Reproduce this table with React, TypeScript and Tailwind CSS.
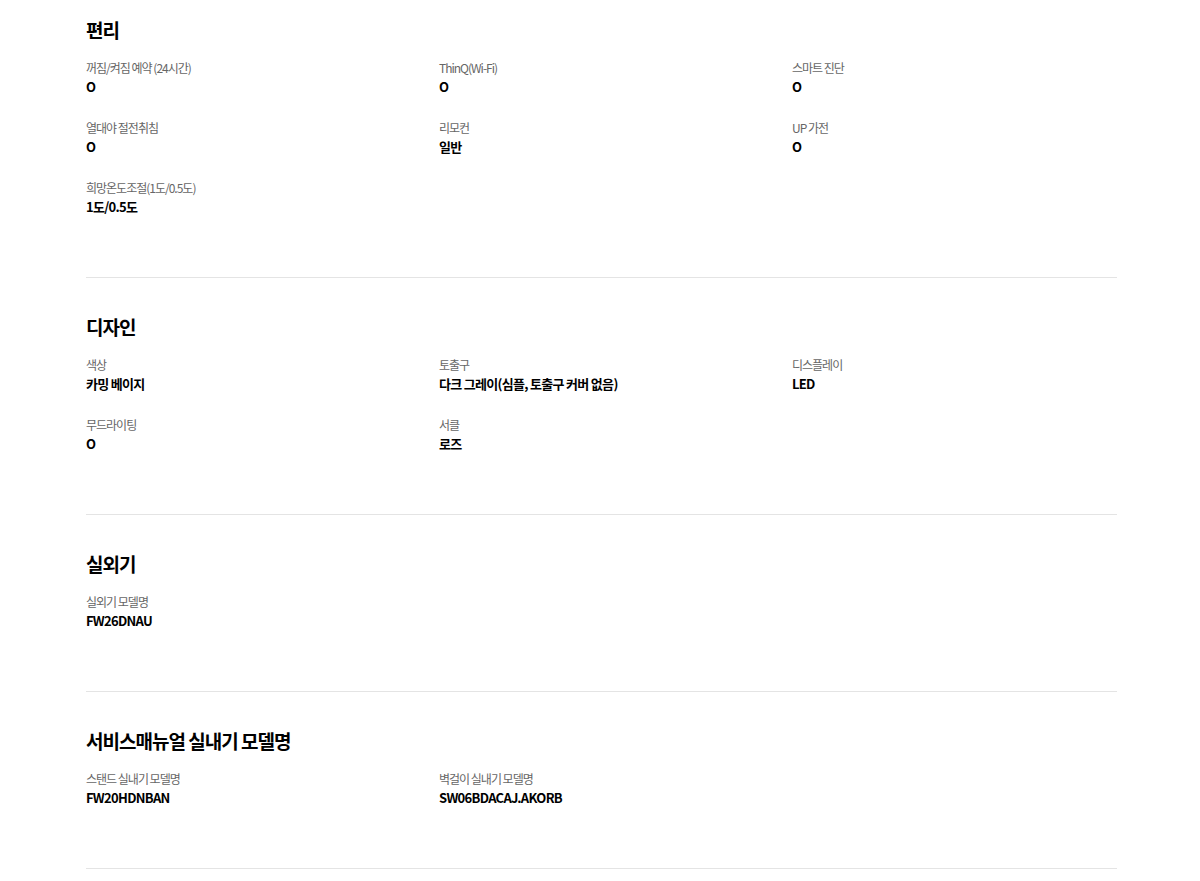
import { FC } from 'react';

interface SpecItem {
    label: string;
    value: string;
}

interface SpecSection {
    title: string;
    items: SpecItem[];
}

const sections: SpecSection[] = [
    {
        title: '편리',
        items: [
            { label: '꺼짐/켜짐 예약 (24시간)', value: 'O' },
            { label: 'ThinQ(Wi-Fi)', value: 'O' },
            { label: '스마트 진단', value: 'O' },
            { label: '열대야 절전취침', value: 'O' },
            { label: '리모컨', value: '일반' },
            { label: 'UP 가전', value: 'O' },
            { label: '희망온도조절(1도/0.5도)', value: '1도/0.5도' },
        ],
    },
    {
        title: '디자인',
        items: [
            { label: '색상', value: '카밍 베이지' },
            { label: '토출구', value: '다크 그레이(심플, 토출구 커버 없음)' },
            { label: '디스플레이', value: 'LED' },
            { label: '무드라이팅', value: 'O' },
            { label: '서클', value: '로즈' },
        ],
    },
    {
        title: '실외기',
        items: [{ label: '실외기 모델명', value: 'FW26DNAU' }],
    },
    {
        title: '서비스매뉴얼 실내기 모델명',
        items: [
            { label: '스탠드 실내기 모델명', value: 'FW20HDNBAN' },
            { label: '벽걸이 실내기 모델명', value: 'SW06BDACAJ.AKORB' },
        ],
    },
];

const Section: FC<{ section: SpecSection; first?: boolean }> = ({ section, first }) => {
    return (
        <section className={`border-b border-[#e4e4e4] pb-[60px] ${first ? 'pt-[16px]' : 'pt-[35px]'}`}>
            <h2 className="text-[19px] leading-[28px] font-bold text-black tracking-[-1px]">
                {section.title}
            </h2>
            <dl className="mt-[14px] grid grid-cols-3 gap-x-7 gap-y-[21px]">
                {section.items.map((item) => (
                    <div key={item.label} className="flex flex-col">
                        <dt className="text-[12px] leading-[19px] text-[#666666] tracking-[-1px]">
                            {item.label}
                        </dt>
                        <dd className="text-[13px] leading-[20px] font-bold text-black tracking-[-0.7px]">
                            {item.value}
                        </dd>
                    </div>
                ))}
            </dl>
        </section>
    );
};

export default function App() {
    return (
        <div className="min-h-screen bg-white font-['Noto_Sans_CJK_KR','Noto_Sans',sans-serif]">
            <div className="ml-[86px] w-[1031px]">
                {sections.map((s, i) => (
                    <Section key={s.title} section={s} first={i === 0} />
                ))}
            </div>
        </div>
    );
}
